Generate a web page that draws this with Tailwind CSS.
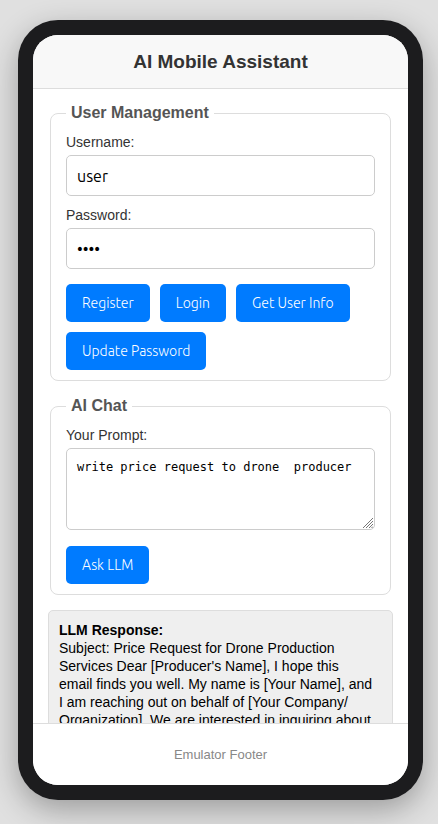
<!DOCTYPE html>
<html lang="en">
<head>
<meta charset="utf-8">
<meta name="viewport" content="width=device-width, initial-scale=1">
<title>AI Mobile Assistant</title>
<script src="https://cdn.jsdelivr.net/npm/@tailwindcss/browser@4"></script>
</head>
<body class="flex h-screen overflow-hidden bg-[#e0e0e0] pt-5 pb-6 pl-[18px] pr-[15px] font-['Liberation_Sans',Arial,sans-serif]">
  <div class="mx-auto flex w-full max-w-md rounded-[40px] bg-[#1c1c1e] p-[15px] shadow-[0_10px_30px_rgba(0,0,0,0.3)]">
    <div class="flex min-w-0 flex-1 flex-col overflow-hidden rounded-[25px] bg-white">
      <header class="border-b border-[#ddd] bg-[#f8f8f8] py-[15px] text-center">
        <h1 class="text-[19px] leading-[23px] font-bold text-[#333]">AI Mobile Assistant</h1>
      </header>
      <main class="min-h-0 flex-1 overflow-y-auto p-[15px] [scrollbar-width:none]">
        <form class="flex flex-col gap-4">
          <fieldset class="mx-0.5 min-w-0 rounded-lg border border-[#ddd] px-[15px] pt-[11px] pb-2.5">
            <legend class="px-[5px] text-[16px] leading-[18px] font-bold text-[#555]">User Management</legend>
            <label for="username" class="mb-1 block text-[14px] leading-[18px] text-[#333]">Username:</label>
            <input id="username" type="text" value="user" class="mb-2.5 block h-[41px] w-full rounded-[5px] border border-[#ccc] bg-white px-2.5 font-[Ubuntu,'Noto_Sans',sans-serif] text-[16px] text-black">
            <label for="password" class="mb-1 block text-[14px] leading-[18px] text-[#333]">Password:</label>
            <input id="password" type="password" value="user" class="block h-[41px] w-full rounded-[5px] border border-[#ccc] bg-white px-2.5 font-[Ubuntu,'Noto_Sans',sans-serif] text-[16px] text-black">
            <div class="mt-[15px] flex flex-wrap gap-2.5">
              <button type="button" class="h-[38px] rounded-[5px] bg-[#007bff] px-4 font-[Ubuntu,'Noto_Sans',sans-serif] text-[14px] font-light text-white">Register</button>
              <button type="button" class="h-[38px] rounded-[5px] bg-[#007bff] px-4 font-[Ubuntu,'Noto_Sans',sans-serif] text-[14px] font-light text-white">Login</button>
              <button type="button" class="h-[38px] rounded-[5px] bg-[#007bff] px-4 font-[Ubuntu,'Noto_Sans',sans-serif] text-[14px] font-light text-white">Get User Info</button>
              <button type="button" class="h-[38px] rounded-[5px] bg-[#007bff] px-4 font-[Ubuntu,'Noto_Sans',sans-serif] text-[14px] font-light text-white">Update Password</button>
            </div>
          </fieldset>
          <fieldset class="mx-0.5 min-w-0 rounded-lg border border-[#ddd] px-[15px] pt-[11px] pb-2.5">
            <legend class="px-[5px] text-[16px] leading-[18px] font-bold text-[#555]">AI Chat</legend>
            <label for="prompt" class="mb-1 block text-[14px] leading-[18px] text-[#333]">Your Prompt:</label>
            <div class="relative mb-4">
              <textarea id="prompt" rows="4" class="block h-[82px] w-full resize-none rounded-[5px] border border-[#ccc] bg-white p-2.5 font-['DejaVu_Sans_Mono',monospace] text-[12px] leading-4 text-black">write price request to drone  producer</textarea>
              <svg aria-hidden="true" class="pointer-events-none absolute right-0.5 bottom-0.5 size-2.5" viewBox="0 0 10 10" fill="none" stroke="#777" stroke-width="1"><path d="M0 10 10 0M3 10 10 3M6 10 10 6M8.500 10 10 8.500"/></svg>
            </div>
            <button type="button" class="block h-[38px] rounded-[5px] bg-[#007bff] px-4 font-[Ubuntu,'Noto_Sans',sans-serif] text-[14px] font-light text-white">Ask LLM</button>
          </fieldset>
        </form>
        <section class="mt-[15px] rounded-[5px] border border-[#ddd] bg-[#efefef] py-2.5 pr-4 pl-2.5 text-[14px] leading-[18px] text-black">
          <h2 class="font-bold">LLM Response:</h2>
          <p>Subject: Price Request for Drone Production Services Dear [Producer's Name], I hope this email finds you well. My name is [Your Name], and I am reaching out on behalf of [Your Company/<wbr>Organization]. We are interested in inquiring about</p>
        </section>
      </main>
      <footer class="border-t border-[#ddd] bg-white py-5 text-center text-[13px] leading-[21px] text-[#888]">Emulator Footer</footer>
    </div>
  </div>
</body>
</html>
